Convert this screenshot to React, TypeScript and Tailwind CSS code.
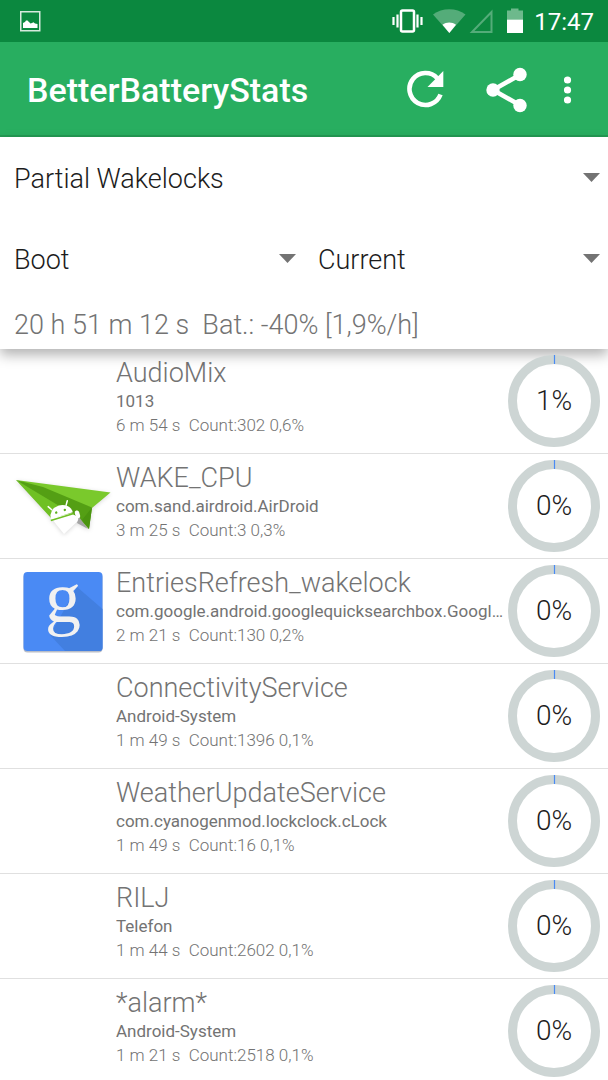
import { useState } from 'react';

interface Wakelock {
  name: string;
  owner: string;
  stats: string;
  percent: number;
  icon?: 'airdroid' | 'google';
}

const wakelocks: Wakelock[] = [
  { name: 'AudioMix', owner: '1013', stats: '6 m 54 s  Count:302 0,6%', percent: 1 },
  { name: 'WAKE_CPU', owner: 'com.sand.airdroid.AirDroid', stats: '3 m 25 s  Count:3 0,3%', percent: 0, icon: 'airdroid' },
  {
    name: 'EntriesRefresh_wakelock',
    owner: 'com.google.android.googlequicksearchbox.Googl…',
    stats: '2 m 21 s  Count:130 0,2%',
    percent: 0,
    icon: 'google',
  },
  { name: 'ConnectivityService', owner: 'Android-System', stats: '1 m 49 s  Count:1396 0,1%', percent: 0 },
  { name: 'WeatherUpdateService', owner: 'com.cyanogenmod.lockclock.cLock', stats: '1 m 49 s  Count:16 0,1%', percent: 0 },
  { name: 'RILJ', owner: 'Telefon', stats: '1 m 44 s  Count:2602 0,1%', percent: 0 },
  { name: '*alarm*', owner: 'Android-System', stats: '1 m 21 s  Count:2518 0,1%', percent: 0 },
];

function StatusBar() {
  return (
    <div className="flex h-[42px] items-center justify-between bg-[#0b883f] pr-[14px] pl-5 text-white">
      <svg width="21" height="21" viewBox="0 0 21 21" fill="none" aria-hidden="true">
        <rect x="0.75" y="0.75" width="19" height="19" stroke="#d6eadd" strokeWidth="1.5" />
        <path d="M3 17v-5l2-1 1-1.5h1.5L9 11l1.5 1.5L12 12l1.5-.8 1.5 1.3 2.500.5v4z" fill="#fff" />
      </svg>
      <div className="flex items-center">
        <svg width="134" height="26" viewBox="390 8 134 26" fill="none" aria-hidden="true">
          <rect x="401" y="10.5" width="13" height="21" rx="1.5" stroke="#fff" strokeWidth="2.5" />
          <path d="M397.500 14.500v13M417.500 14.500v13M393.500 17v8M421.500 17v8" stroke="#fff" strokeWidth="2.200" />
          <path d="M433 14.500c9-7 23.500-7 32.500 0L449.300 33z" fill="#54ac79" />
          <path d="M442.500 24.700c4-3 9.500-3 13.500 0L449.300 33z" fill="#fff" />
          <path d="M491.500 12v20h-19.500z" stroke="#54ac79" strokeWidth="2" />
          <path d="M507 19.500V10.500h4V8.500h7.500v2h4.500v9z" fill="#6db98c" />
          <path d="M507 19.500h16V33h-16z" fill="#fff" />
        </svg>
        <span className="ml-[10px] pt-[2px] text-2xl">17:47</span>
      </div>
    </div>
  );
}

function Toolbar() {
  return (
    <header className="flex h-[95px] items-center border-b-2 border-[#239a53] bg-[#28ae60] pt-[2px] pl-[27px] text-white">
      <h1 className="flex-1 pt-[2px] text-[34px] font-medium">BetterBatteryStats</h1>
      <button type="button" aria-label="Refresh" className="mr-10">
        <svg width="40" height="40" viewBox="0 0 40 40" fill="none">
          <path d="M31.300 8.200A16 16 0 1 0 34.500 24.500" stroke="#fff" strokeWidth="4.600" />
          <path d="M37.300 1v16H21.500z" fill="#fff" />
        </svg>
      </button>
      <button type="button" aria-label="Share" className="mr-9">
        <svg width="42" height="46" viewBox="0 0 42 46">
          <path d="M34.500 7.500 7 23l27.500 15.500" fill="none" stroke="#fff" strokeWidth="4.500" />
          <circle cx="34" cy="7.500" r="6.700" fill="#fff" />
          <circle cx="7" cy="23" r="6.700" fill="#fff" />
          <circle cx="34" cy="38.500" r="6.700" fill="#fff" />
        </svg>
      </button>
      <button type="button" aria-label="More options" className="mr-9">
        <svg width="8" height="28" viewBox="0 0 8 28" fill="#fff">
          <circle cx="3.500" cy="4" r="3.600" />
          <circle cx="3.500" cy="14" r="3.600" />
          <circle cx="3.500" cy="24" r="3.600" />
        </svg>
      </button>
    </header>
  );
}

function Spinner({ label, options }: { label: string; options: string[] }) {
  const [value, setValue] = useState(options[0]);

  return (
    <div className="relative flex h-[81px] flex-1 items-center">
      <select
        aria-label={label}
        value={value}
        onChange={(e) => setValue(e.target.value)}
        className="h-full w-full appearance-none bg-transparent pt-[3px] pl-[14px] text-[27px] font-light text-[#1c1c1c]"
      >
        {options.map((option) => (
          <option key={option}>{option}</option>
        ))}
      </select>
      <svg className="pointer-events-none absolute right-2" width="17" height="9" viewBox="0 0 17 9" aria-hidden="true">
        <path d="M0 0h17L8.500 9z" fill="#737373" />
      </svg>
    </div>
  );
}

function AirDroidIcon() {
  return (
    <svg width="98" height="64" viewBox="14 474 98 64" className="drop-shadow-sm" aria-hidden="true">
      {/* paper plane */}
      <path d="M47 513l17 21 15-14 1-12z" fill="#fff" />
      <path d="M16 480l64 29 2 8-9-4-22 5z" fill="#6fc024" />
      <path d="M16 480l94.500 12.500L92 508z" fill="#7ac92c" />
      <path d="M16 480l27 7 49 20.500L89 529l-13-13z" fill="#549f14" />
      <path d="M92 507.500L89 529l-7-9z" fill="#4a940f" />
      <path d="M79 517l9 12-11-6z" fill="#a5a5a5" />
      {/* android */}
      <g transform="rotate(-17 62 516)">
        <path d="M50.500 515.500a11.500 10.500 0 0 1 23 0z" fill="#fff" />
        <path d="M54 507l-2.500-4M69 507l2.500-4" stroke="#fff" strokeWidth="1.500" strokeLinecap="round" />
        <circle cx="57.500" cy="511" r="1.200" fill="#5cb01c" />
        <circle cx="66.500" cy="511" r="1.200" fill="#5cb01c" />
        <path d="M50 517h24" stroke="#6fc024" strokeWidth="1.600" />
        <rect x="75" y="515" width="4.500" height="8" rx="2.200" fill="#fff" />
      </g>
    </svg>
  );
}

function GoogleIcon() {
  return (
    <svg width="80" height="81" viewBox="0 0 80 81" className="overflow-visible" aria-hidden="true">
      <rect x="0.500" y="2.500" width="79" height="79" rx="4" fill="#b9bec8" />
      <rect x="0.500" y="1" width="79" height="79" rx="4" fill="#4a8af4" />
      <path d="M54 16l25.500 22v39a3 3 0 0 1-3 3H42L27 64z" fill="#427fe0" />
      <text x="40" y="51" textAnchor="middle" fill="#f1f1f1" className="font-['Liberation_Serif',serif] text-[72px]">
        g
      </text>
    </svg>
  );
}

function PercentRing({ percent }: { percent: number }) {
  return (
    <div className="relative mr-2 grid size-[92px] shrink-0 place-items-center">
      <svg className="absolute inset-0" width="92" height="92" viewBox="0 0 92 92" fill="none" aria-hidden="true">
        <circle cx="46" cy="46" r="41.500" stroke="#cdd5d4" strokeWidth="9" />
        <path d="M46.500 0v9" stroke="#4a8af4" strokeWidth="1.200" />
      </svg>
      <span className="text-[28px] font-light text-[#1c1c1c]">{percent}%</span>
    </div>
  );
}

function WakelockRow({ item }: { item: Wakelock }) {
  return (
    <li className="flex h-[105px] items-center border-b border-[#e0e0e0]">
      <div className="flex w-[116px] shrink-0 justify-center pl-[10px]">
        {item.icon === 'airdroid' && <AirDroidIcon />}
        {item.icon === 'google' && <GoogleIcon />}
      </div>
      <div className="min-w-0 flex-1 pr-1 pb-2 text-[#737373]">
        <h2 className="text-[27px] leading-8 font-light">{item.name}</h2>
        <p className="truncate text-[17px] leading-6">{item.owner}</p>
        <p className="text-[17px] leading-6 font-light whitespace-pre">{item.stats}</p>
      </div>
      <PercentRing percent={item.percent} />
    </li>
  );
}

export default function App() {
  return (
    <div className="min-h-screen overflow-hidden bg-white font-['Roboto',sans-serif]">
      <StatusBar />
      <Toolbar />
      <section className="relative bg-white shadow-[0_6px_12px_rgba(0,0,0,0.3)]">
        <Spinner label="Statistic" options={['Partial Wakelocks', 'Kernel Wakelocks', 'Alarms']} />
        <div className="flex">
          <Spinner label="From" options={['Boot', 'Unplugged']} />
          <Spinner label="To" options={['Current', 'Screen Off']} />
        </div>
        <p className="h-[50px] pt-[2px] pl-[14px] text-[27px] leading-[48px] font-light whitespace-pre text-[#737373]">
          {'20 h 51 m 12 s  Bat.: -40% [1,9%/h]'}
        </p>
      </section>
      <ul>
        {wakelocks.map((item, index) => (
          <WakelockRow key={index} item={item} />
        ))}
      </ul>
    </div>
  );
}
